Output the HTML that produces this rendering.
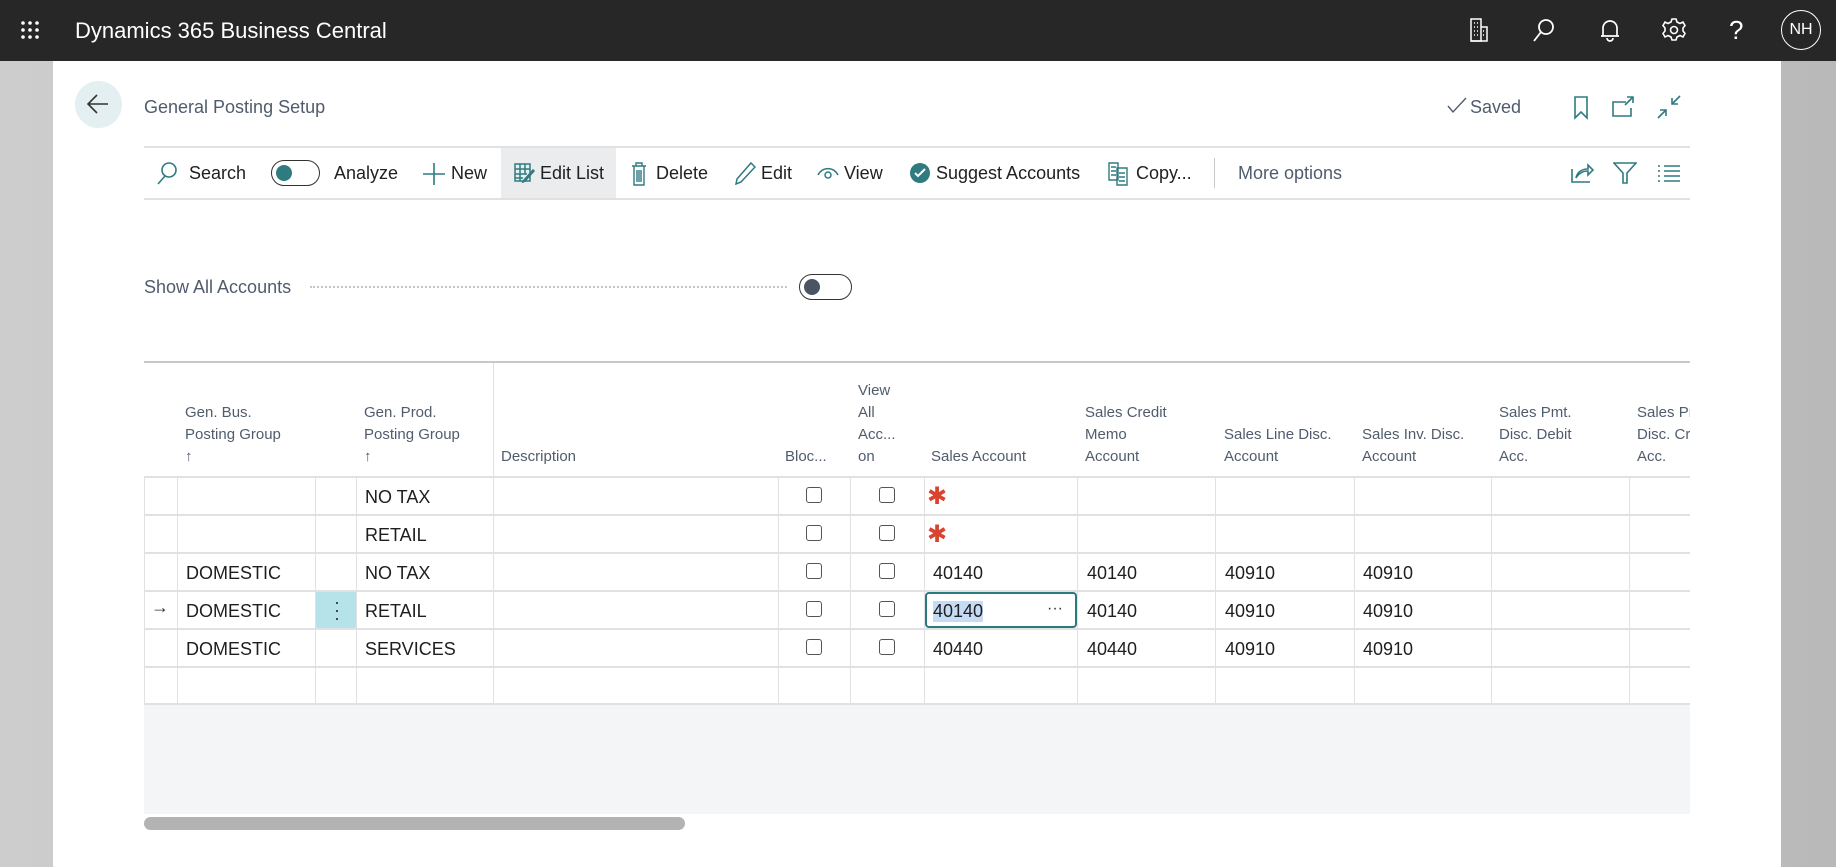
<!DOCTYPE html>
<html><head><meta charset="utf-8"><style>
*{margin:0;padding:0;box-sizing:border-box}
body{width:1836px;height:867px;overflow:hidden;font-family:"Liberation Sans",sans-serif;background:linear-gradient(90deg,#cdcdcd,#b9b9b9);position:relative}
.a{position:absolute;white-space:nowrap}
.top{left:0;top:0;width:1836px;height:61px;background:#272727}
.panel{left:53px;top:61px;width:1728px;height:806px;background:#fff}
.tb{font-size:18px;color:#212121;top:163px}
.hd{font-size:15px;color:#505c6d;line-height:22px;position:absolute;bottom:0}
.cell{font-size:18px;color:#1e1e1e}
.hl{background:#e1e1e1;position:absolute}
.vl{background:#e1e1e1;position:absolute;width:1px}
.cb{position:absolute;width:16px;height:16px;border:1.5px solid #555;border-radius:3px;background:#fff}
.ast{color:#d9432f;font-size:24px;font-family:"DejaVu Sans",sans-serif}
svg{position:absolute}
</style></head><body>
<div class="a top"></div>
<svg style="left:20px;top:20px" width="20" height="20" viewBox="0 0 20 20" fill="#fff"><circle cx="3" cy="3" r="1.8"/><circle cx="10" cy="3" r="1.8"/><circle cx="17" cy="3" r="1.8"/><circle cx="3" cy="10" r="1.8"/><circle cx="10" cy="10" r="1.8"/><circle cx="17" cy="10" r="1.8"/><circle cx="3" cy="17" r="1.8"/><circle cx="10" cy="17" r="1.8"/><circle cx="17" cy="17" r="1.8"/></svg>
<div class="a" style="left:75px;top:18px;color:#fff;font-size:22px">Dynamics 365 Business Central</div>
<svg style="left:1468px;top:17px" width="22" height="26" viewBox="0 0 22 26" fill="none" stroke="#fff" stroke-width="1.5"><rect x="3" y="2" width="10" height="22"/><path d="M13 10h6v14H3M6 6h1M9 6h1M6 10h1M9 10h1M6 14h1M9 14h1M6 18h1M9 18h1M15 14h1M15 18h1"/></svg>
<svg style="left:1531px;top:17px" width="26" height="26" viewBox="0 0 26 26" fill="none" stroke="#fff" stroke-width="1.8"><circle cx="15" cy="10" r="7"/><path d="M10 15L3 24"/></svg>
<svg style="left:1598px;top:17px" width="24" height="26" viewBox="0 0 24 26" fill="none" stroke="#fff" stroke-width="1.7"><path d="M5 19V11a7 7 0 0114 0v8h2H3h2M9 21a3 3 0 006 0"/></svg>
<svg style="left:1661px;top:17px" width="26" height="26" viewBox="0 0 26 26" fill="none" stroke="#fff" stroke-width="1.6"><circle cx="13" cy="13" r="3.5"/><path d="M11 2h4l1 3 3 1.5 3-1.5 2 3.5-2 2.5v3l2 2.5-2 3.5-3-1.5-3 1.5-1 3h-4l-1-3-3-1.5-3 1.5-2-3.5 2-2.5v-3L2 8.5 4 5l3 1.5L10 5z"/></svg>
<div class="a" style="left:1729px;top:15px;color:#fff;font-size:26px">?</div>
<div class="a" style="left:1781px;top:10px;width:40px;height:40px;border:1.5px solid #fff;border-radius:50%;color:#fff;font-size:16px;text-align:center;line-height:37px">NH</div>

<div class="a panel"></div>
<div class="a" style="left:75px;top:81px;width:47px;height:47px;border-radius:50%;background:#e3eff1"></div>
<svg style="left:86px;top:93px" width="24" height="22" viewBox="0 0 24 22" fill="none" stroke="#333" stroke-width="1.6"><path d="M22 11H2M11 2L2 11l9 9"/></svg>
<div class="a" style="left:144px;top:97px;font-size:18px;color:#505c6d">General Posting Setup</div>
<svg style="left:1447px;top:97px" width="20" height="18" viewBox="0 0 20 18" fill="none" stroke="#505c6d" stroke-width="1.4"><path d="M1 9l5 6L19 1"/></svg>
<div class="a" style="left:1470px;top:97px;font-size:18px;color:#505c6d">Saved</div>
<svg style="left:1572px;top:96px" width="18" height="24" viewBox="0 0 18 24" fill="none" stroke="#2f7b80" stroke-width="1.6"><path d="M3 1h12v21l-6-6-6 6z"/></svg>
<svg style="left:1611px;top:96px" width="26" height="22" viewBox="0 0 26 22" fill="none" stroke="#2f7b80" stroke-width="1.6"><path d="M15 6H2v14h18v-8M16 1h6v6M22 1l-8 8"/></svg>
<svg style="left:1656px;top:94px" width="26" height="26" viewBox="0 0 26 26" fill="none" stroke="#2f7b80" stroke-width="1.6"><path d="M24 2l-8 8M16 4v6h6M2 24l8-8M4 16h6v6"/></svg>

<div class="hl" style="left:144px;top:146px;width:1546px;height:2px"></div>
<div class="hl" style="left:144px;top:198px;width:1546px;height:2px"></div>
<div class="a" style="left:501px;top:148px;width:115px;height:50px;background:#ebecee"></div>
<svg style="left:156px;top:161px" width="22" height="24" viewBox="0 0 22 24" fill="none" stroke="#2f7b80" stroke-width="1.6"><circle cx="13" cy="9" r="7"/><path d="M9 15L2 23"/></svg>
<div class="a tb" style="left:189px">Search</div>
<div class="a" style="left:271px;top:160px;width:49px;height:26px;border:1.6px solid #333;border-radius:13px"></div>
<div class="a" style="left:276px;top:165px;width:16px;height:16px;border-radius:50%;background:#2f7b80"></div>
<div class="a tb" style="left:334px">Analyze</div>
<svg style="left:422px;top:162px" width="24" height="24" viewBox="0 0 24 24" stroke="#2f7b80" stroke-width="1.6"><path d="M12 1v22M1 12h22"/></svg>
<div class="a tb" style="left:451px">New</div>
<svg style="left:514px;top:163px" width="22" height="20" viewBox="0 0 22 20" fill="none" stroke="#2f7b80" stroke-width="1.5"><rect x="1" y="1" width="15" height="17"/><path d="M1 6h15M1 11h12M1 15h8M6 1v17M11 1v10" /><path d="M20 8l-9 10-2 1 1-2 9-10z" fill="#fff"/></svg>
<div class="a tb" style="left:540px">Edit List</div>
<svg style="left:631px;top:162px" width="16" height="24" viewBox="0 0 16 24" fill="none" stroke="#2f7b80" stroke-width="1.4"><path d="M1 4h14M5 4V1h6v3M3 4v19h10V4M6 8v12M8 8v12M10 8v12"/></svg>
<div class="a tb" style="left:656px">Delete</div>
<svg style="left:734px;top:161px" width="22" height="24" viewBox="0 0 22 24" fill="none" stroke="#2f7b80" stroke-width="1.5"><path d="M17 2l4 4L7 21l-5 2 1-5z"/></svg>
<div class="a tb" style="left:761px">Edit</div>
<svg style="left:816px;top:165px" width="24" height="16" viewBox="0 0 24 16" fill="none" stroke="#2f7b80" stroke-width="1.5"><path d="M2 10a11 11 0 0120 0"/><circle cx="12" cy="10" r="3"/></svg>
<div class="a tb" style="left:844px">View</div>
<div class="a" style="left:910px;top:163px;width:20px;height:20px;border-radius:50%;background:#2f7b80"></div>
<svg style="left:910px;top:163px" width="20" height="20" viewBox="0 0 20 20" fill="none" stroke="#fff" stroke-width="2"><path d="M5 10l3 3 7-7"/></svg>
<div class="a tb" style="left:936px">Suggest Accounts</div>
<svg style="left:1108px;top:162px" width="22" height="24" viewBox="0 0 22 24" fill="none" stroke="#2f7b80" stroke-width="1.4"><path d="M1 1h9v17H1zM9 6h10v17H9zM3 5h5M3 9h5M3 13h5M11 11h6M11 15h6M11 19h6"/></svg>
<div class="a tb" style="left:1136px">Copy...</div>
<div class="a" style="left:1214px;top:158px;width:1px;height:30px;background:#c8c8c8"></div>
<div class="a tb" style="left:1238px;color:#505c6d">More options</div>
<svg style="left:1570px;top:161px" width="24" height="22" viewBox="0 0 24 22" fill="none" stroke="#2f7b80" stroke-width="1.6"><path d="M2 8v13h18M6 17c1-6 6-9 12-9V4l5 5-5 5V10c-5 0-9 2-12 7z"/></svg>
<svg style="left:1613px;top:161px" width="24" height="24" viewBox="0 0 24 24" fill="none" stroke="#2f7b80" stroke-width="1.6"><path d="M1 2h22l-9 10v10h-4V12z"/></svg>
<svg style="left:1657px;top:164px" width="24" height="18" viewBox="0 0 24 18" fill="none" stroke="#2f7b80" stroke-width="1.6"><path d="M1 2h2M7 2h16M1 7h2M7 7h16M1 12h2M7 12h16M1 17h2M7 17h16"/></svg>

<div class="a" style="left:144px;top:277px;font-size:18px;color:#505c6d">Show All Accounts</div>
<div class="a" style="left:310px;top:286px;width:477px;border-top:2px dotted #c6c6c6"></div>
<div class="a" style="left:799px;top:274px;width:53px;height:26px;border:1.6px solid #333;border-radius:13px"></div>
<div class="a" style="left:804px;top:279px;width:16px;height:16px;border-radius:50%;background:#4a5463"></div>

<div class="a" style="left:144px;top:704px;width:1546px;height:110px;background:#f4f5f6"></div>
<div class="a" style="left:144px;top:817px;width:541px;height:13px;border-radius:7px;background:#b3b3b3"></div>
<div class="hl" style="left:144px;top:361px;width:1546px;height:2px;background:#c8c8c8"></div>
<div class="hl" style="left:144px;top:476px;width:1546px;height:2px"></div>
<div class="hl" style="left:144px;top:514px;width:1546px;height:2px"></div>
<div class="hl" style="left:144px;top:552px;width:1546px;height:2px"></div>
<div class="hl" style="left:144px;top:590px;width:1546px;height:2px"></div>
<div class="hl" style="left:144px;top:628px;width:1546px;height:2px"></div>
<div class="hl" style="left:144px;top:666px;width:1546px;height:2px"></div>
<div class="hl" style="left:144px;top:703px;width:1546px;height:2px"></div>
<div class="vl" style="left:144px;top:477px;height:227px"></div>
<div class="vl" style="left:177px;top:477px;height:227px"></div>
<div class="vl" style="left:315px;top:477px;height:227px"></div>
<div class="vl" style="left:356px;top:477px;height:227px"></div>
<div class="vl" style="left:493px;top:363px;height:341px"></div>
<div class="vl" style="left:778px;top:477px;height:227px"></div>
<div class="vl" style="left:850px;top:477px;height:227px"></div>
<div class="vl" style="left:924px;top:477px;height:227px"></div>
<div class="vl" style="left:1077px;top:477px;height:227px"></div>
<div class="vl" style="left:1215px;top:477px;height:227px"></div>
<div class="vl" style="left:1354px;top:477px;height:227px"></div>
<div class="vl" style="left:1491px;top:477px;height:227px"></div>
<div class="vl" style="left:1629px;top:477px;height:227px"></div>

<div class="a" style="left:0;top:363px;width:1836px;height:105px">
<div class="hd" style="left:185px">Gen. Bus.<br>Posting Group<br>↑</div>
<div class="hd" style="left:364px">Gen. Prod.<br>Posting Group<br>↑</div>
<div class="hd" style="left:501px">Description</div>
<div class="hd" style="left:785px">Bloc...</div>
<div class="hd" style="left:858px">View<br>All<br>Acc...<br>on</div>
<div class="hd" style="left:931px">Sales Account</div>
<div class="hd" style="left:1085px">Sales Credit<br>Memo<br>Account</div>
<div class="hd" style="left:1224px">Sales Line Disc.<br>Account</div>
<div class="hd" style="left:1362px">Sales Inv. Disc.<br>Account</div>
<div class="hd" style="left:1499px">Sales Pmt.<br>Disc. Debit<br>Acc.</div>
<div class="hd" style="left:1637px;width:53px;overflow:hidden">Sales Pmt.<br>Disc. Credit<br>Acc.</div>
</div>

<div class="a" style="left:316px;top:592px;width:40px;height:36px;background:#b6e3e9"></div>
<div class="a" style="left:334px;top:598px;font-size:18px;color:#333;line-height:8px">·<br>·<br>·</div>
<div class="a" style="left:151px;top:597px;font-size:18px;color:#333">→</div>

<div class="a cell" style="left:365px;top:487px">NO TAX</div>
<div class="a cell" style="left:365px;top:525px">RETAIL</div>
<div class="a cell" style="left:186px;top:563px">DOMESTIC</div><div class="a cell" style="left:365px;top:563px">NO TAX</div>
<div class="a cell" style="left:186px;top:601px">DOMESTIC</div><div class="a cell" style="left:365px;top:601px">RETAIL</div>
<div class="a cell" style="left:186px;top:639px">DOMESTIC</div><div class="a cell" style="left:365px;top:639px">SERVICES</div>

<div class="cb" style="left:806px;top:487px"></div><div class="cb" style="left:879px;top:487px"></div>
<div class="cb" style="left:806px;top:525px"></div><div class="cb" style="left:879px;top:525px"></div>
<div class="cb" style="left:806px;top:563px"></div><div class="cb" style="left:879px;top:563px"></div>
<div class="cb" style="left:806px;top:601px"></div><div class="cb" style="left:879px;top:601px"></div>
<div class="cb" style="left:806px;top:639px"></div><div class="cb" style="left:879px;top:639px"></div>

<div class="a ast" style="left:927px;top:482px">✱</div>
<div class="a ast" style="left:927px;top:520px">✱</div>

<div class="a cell" style="left:933px;top:563px">40140</div><div class="a cell" style="left:1087px;top:563px">40140</div><div class="a cell" style="left:1225px;top:563px">40910</div><div class="a cell" style="left:1363px;top:563px">40910</div>
<div class="a" style="left:925px;top:592px;width:152px;height:36px;border:2px solid #2a7a7f;border-radius:4px;background:#fff"></div>
<div class="a cell" style="left:933px;top:601px;background:#c6dcf5">40140</div>
<div class="a" style="left:1047px;top:600px;font-size:16px;color:#333">···</div>
<div class="a cell" style="left:1087px;top:601px">40140</div><div class="a cell" style="left:1225px;top:601px">40910</div><div class="a cell" style="left:1363px;top:601px">40910</div>
<div class="a cell" style="left:933px;top:639px">40440</div><div class="a cell" style="left:1087px;top:639px">40440</div><div class="a cell" style="left:1225px;top:639px">40910</div><div class="a cell" style="left:1363px;top:639px">40910</div>
</body></html>
